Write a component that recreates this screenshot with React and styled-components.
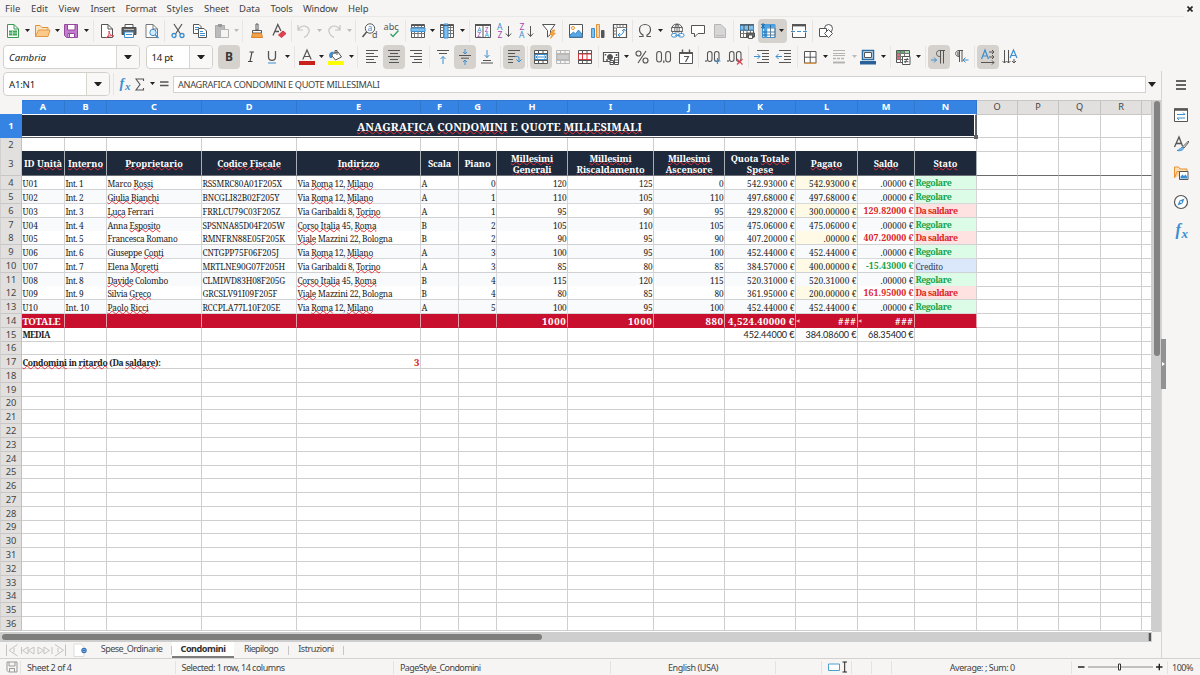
import React, { useLayoutEffect, useRef } from 'react';
import styled, { createGlobalStyle, css } from 'styled-components';

const SANS = '"Noto Sans", "Open Sans", sans-serif';
const SERIF = '"Noto Serif", "Droid Serif", "DejaVu Serif Condensed", "DejaVu Serif", serif';
const INK = '#555';
const BLUE = '#3b8ed0';

const Global = createGlobalStyle`
  * { box-sizing: border-box; }
  body { margin: 0; background: #f6f5f4; overflow: hidden; font-family: ${SANS}; font-size: 9.5px; color: #3c3c3c; }
`;

/* Text whose tracking is adjusted so that it fills a given width. */
const FitSpan = styled.span`
  display: inline-block;
  position: relative;
  z-index: 1;
  white-space: pre;
  flex: none;
`;
function Fit({ w, children, className }) {
  const ref = useRef(null);
  useLayoutEffect(() => {
    const el = ref.current;
    if (!w) return;
    el.style.letterSpacing = '0px';
    const n = el.textContent.length;
    const gap = (w - el.getBoundingClientRect().width) / n;
    el.style.letterSpacing = gap.toFixed(3) + 'px';
  }, [w, children]);
  return <FitSpan ref={ref} className={className}>{children}</FitSpan>;
}

/* ---------- frame ---------- */
const Window = styled.div`
  width: 1200px; height: 675px; display: flex; flex-direction: column; background: #f6f5f4; overflow: hidden;
`;
const MenuBar = styled.div`
  height: 17px; flex: none; display: flex; align-items: center; position: relative;
  &::after { content: ''; position: absolute; left: 0; right: 16px; bottom: 0; height: 1px; background: #eae9e7; }
`;
const MenuItem = styled.div`
  margin-left: ${p => p.$ml}px; height: 17px; display: flex; align-items: center; color: #424242;
`;
const CloseMark = styled.div`
  margin-left: auto; width: 20px; height: 16px; display: flex; align-items: center; justify-content: center; padding-right: 1px;
`;
const Toolbar = styled.div`
  height: ${p => p.$h}px; flex: none; display: flex; align-items: center; padding-bottom: ${p => p.$pb || 0}px;
`;
const Slot = styled.div`
  flex: none; width: ${p => p.$w}px; margin-left: ${p => p.$ml}px; height: 24px;
  display: flex; align-items: center; justify-content: center; gap: 0;
  border-radius: 4px; background: ${p => (p.$on ? '#d5d2ce' : 'transparent')};
  svg { display: block; flex: none; overflow: visible; }
`;
const Sep = styled.div`
  flex: none; width: 1px; height: 22px; margin-left: ${p => p.$ml}px; background: #e6e5e3;
`;
const Combo = styled.div`
  flex: none; width: ${p => p.$w}px; height: 24px; margin-left: ${p => p.$ml}px; display: flex;
  background: #fff; border: 1px solid #d3d0cc; border-radius: 4px; overflow: hidden;
`;
const ComboText = styled.div`
  flex: 1; display: flex; align-items: center; padding-left: ${p => p.$pl || 5}px; color: #222; font-size: 9.6px;
  font-style: ${p => (p.$italic ? 'italic' : 'normal')};
`;
const ComboButton = styled.div`
  width: 23px; border-left: 1px solid #d8d5d1; background: #f9f8f7; display: flex; align-items: center; justify-content: center;
`;

const Tri = ({ w = 6, c = '#222' }) => (
  <svg width={w} height={w * 0.62} viewBox="0 0 10 6"><path d="M0 0H10L5 6Z" fill={c} /></svg>
);
const Svg = ({ children, w = 16, h = 16, vb }) => (
  <svg width={w} height={h} viewBox={vb || `0 0 ${w} ${h}`} fill="none" stroke={INK} strokeWidth="1">{children}</svg>
);
const T = ({ x, y, s = 8, c = INK, children, b, i, f = SANS }) => (
  <text x={x} y={y} fontSize={s} fill={c} stroke="none" fontFamily={f} fontWeight={b ? 700 : 400} fontStyle={i ? 'italic' : 'normal'}>{children}</text>
);

const gridLines = 'M1.5 4.5H14.5M1.5 7.5H14.5M1.5 10.5H14.5M4.5 1.5V14.5M8 1.5V14.5M11.5 1.5V14.5';
const icons = {
  newdoc: <><path d="M2.500 1.500H9L13.500 6V14.500H2.500Z" stroke="#3a9a50" fill="#fff" /><path d="M9 1.500V6H13.500" stroke="#3a9a50" /><path d="M4 7.500H12V12.500H4Z" fill="#43a55a" stroke="none" /><path d="M4 10H12M7.500 8V12.500" stroke="#c9ecd0" strokeWidth=".8" /></>,
  open: <><path d="M1.500 13.500V2.500H6L8 4.500H14V7" stroke="#dd9438" fill="#fbe3c0" /><path d="M1.500 13.500L4.500 7H16L14 13.500Z" fill="#fbc98a" stroke="#e39a45" /></>,
  save: <><path d="M1.500 1.500H14.500V14.500H3.500L1.500 12.500Z" fill="#c27ccb" stroke="#96479f" /><path d="M4.500 1.500H12V7H4.500Z" fill="#fff" stroke="#96479f" /><path d="M5 10.500H11.500V14.500H5Z" fill="#fff" stroke="#96479f" /><path d="M6.500 11V14" stroke="#96479f" /></>,
  pdf: <><path d="M2.500 1.500H9L13.500 6V14.500H2.500Z" fill="#fff" /><path d="M9 1.500V6H13.500" /><path d="M7 15C10 13 10.500 10 10 8C10.500 12 13 13 15 13C12 12 9 13 7 15Z" stroke="#d9414c" fill="#fff" /></>,
  print: <><path d="M4 4V1.500H12V4" fill="#fff" /><path d="M1 4.500H15V11.500H1Z" fill="#5a5f63" stroke="#4d4d4d" /><path d="M3 6.500H13" stroke="#bbb" /><path d="M3.500 9H12.500V14.500H3.500Z" fill="#fff" stroke={BLUE} /><path d="M5 11.500H11" stroke={BLUE} /></>,
  preview: <><path d="M2 1.500H9L13.500 6V14.500H2Z" fill="#fff" stroke="#777" /><path d="M9 1.500V6H13.500" stroke="#777" /><circle cx="9" cy="9.500" r="3.200" stroke={BLUE} fill="#d5eafa" /><path d="M11.300 12L14.500 15" stroke={BLUE} strokeWidth="1.500" /></>,
  cut: <><path d="M4 1L10.500 11M12 1L5.500 11" stroke="#555" strokeWidth="1.200" /><circle cx="4" cy="12.500" r="2" stroke={BLUE} strokeWidth="1.300" /><circle cx="12" cy="12.500" r="2" stroke={BLUE} strokeWidth="1.300" /></>,
  copy: <><path d="M1.500 1.500H7L9 3.500V10.500H1.500Z" fill="#fff" /><path d="M6.500 5.500H12L14.500 8V14.500H6.500Z" fill="#fff" /><path d="M3 4.500H7M3 6.500H6M8 8.500H11M8 10.500H13M8 12.500H13" stroke={BLUE} /></>,
  paste: <><path d="M1.500 2.500H10.500V14.500H1.500Z" fill="#bbb" stroke="#aaa" /><path d="M4 1H8V4H4Z" fill="#999" stroke="none" /><path d="M6.500 6.500H14.500V14.500H6.500Z" fill="#f4f4f4" stroke="#b5b5b5" /></>,
  brush: <><path d="M7 1H9V7H7Z" fill="#fff" stroke="#555" /><path d="M3.500 7.500H12.500V10H3.500Z" fill="#fff" stroke="#555" /><path d="M3.500 10.500H12.500L13.500 14.500H2.500Z" fill="#f3a248" stroke="#d9822b" /></>,
  clear: <><path d="M2 12.500L6.800 1.500L10 8M3.500 8.500H8" strokeWidth="1.300" /><path d="M7.500 12L12 8L15 10.500L10.500 14.500Z" fill="#e0424f" stroke="#d03440" /></>,
  undo: <path d="M2 2V7H7M2 7C4 3 8 2 11 4C15 7 13 12 8 14.500" stroke="#c4c4c4" strokeWidth="1.200" />,
  redo: <path d="M14 2V7H9M14 7C12 3 8 2 5 4C1 7 3 12 8 14.500" stroke="#c4c4c4" strokeWidth="1.200" />,
  find: <><circle cx="8" cy="5.500" r="4.700" fill="#fff" /><path d="M4.800 8.800L.5 14" strokeWidth="1.500" /><T x={5.500} y={8} s={8.500} c={BLUE}>a</T><T x={10} y={15} s={9}>d</T></>,
  abc: <><T x={-.5} y={6.500} s={9.200}>abc</T><path d="M6.500 11L9 13.500L14.500 7.500" stroke="#38a169" strokeWidth="1.400" /></>,
  rows: <><path d="M1.500 1.500H14.500V14.500H1.500Z" fill="#fff" /><path d={gridLines} stroke="#777" /><path d="M1 5H15V8.500H1Z" fill="#7fc0ef" stroke={BLUE} /><path d="M1.500 2.500H14.500" /></>,
  cols: <><path d="M1.500 1.500H14.500V14.500H1.500Z" fill="#fff" /><path d={gridLines} stroke="#777" /><path d="M5 1V15H9V1Z" fill="#7fc0ef" stroke={BLUE} /><path d="M1.500 2.500H14.500" /></>,
  sort: <><path d="M.5 1.500H15.500V14.500H.5ZM8 2V14.500" fill="#fff" /><path d="M0 2H16" strokeWidth="2" /><T x={2.200} y={8.500} s={6.500} c={BLUE}>A</T><T x={2.200} y={14} s={6.500} c="#9b3fb0">Z</T><T x={9.700} y={8.500} s={6.500} c="#9b3fb0">Z</T><T x={9.700} y={14} s={6.500} c={BLUE}>A</T></>,
  az: <><T x={0} y={6.500} s={8.500} c={BLUE}>A</T><T x={0.500} y={15} s={8.500} c="#a545b8">Z</T><path d="M11.500 3V13.500M8.800 10.500L11.500 13.500L14.200 10.500" /></>,
  za: <><T x={0.500} y={6.500} s={8.500} c="#a545b8">Z</T><T x={0} y={15} s={8.500} c={BLUE}>A</T><path d="M11.500 3V13.500M8.800 10.500L11.500 13.500L14.200 10.500" /></>,
  filter: <><path d="M1.500 1.500H14L9.500 7.500V11.500L6.500 14V7.500Z" fill="#fff" /><path d="M11.500 7L8.500 11.500H11L9.500 15.500L14.500 10H12L14 7Z" fill="#f5a442" stroke="#e48b22" strokeWidth=".6" /></>,
  image: <><path d="M1.500 1.500H14.500V14.500H1.500Z" fill="#fff" /><circle cx="5" cy="5" r="1.500" stroke="#e8912d" /><path d="M2 14V12L5.500 9L7.500 11L10.500 7L14 11V14Z" fill="#5aa6e0" stroke={BLUE} /></>,
  chart: <><path d="M1.500 5.500H4.500V14.500H1.500Z" fill="#7fc0ef" stroke={BLUE} /><path d="M6.500 1.500H9.500V14.500H6.500Z" fill="#fbd5a5" stroke="#e8912d" /><path d="M11.500 7.500H14V14.500H11.500Z" fill="#555" /></>,
  pivot: <><path d="M1.500 1.500H14.500V14.500H1.500Z" fill="#fff" strokeWidth="1.200" /><path d="M5 2V4.500H14.500M2 5H4.500V14.500M8 2V4M11 2V4M2 8H4M2 11H4" stroke="#777" /><path d="M6 12C9 13 12 10 12 6.500M10 8L12 6L13.500 8M8 10L6 12L8 13.800" stroke={BLUE} /></>,
  omega: <path d="M2 13.500H6V12C3 10.500 2.500 8 2.500 6.500C2.500 3.500 5 1.500 8 1.500S13.500 3.500 13.500 6.500C13.500 8 13 10.500 10 12V13.500H14" strokeWidth="1.200" />,
  link: <><circle cx="8" cy="6.500" r="5.500" fill="#fff" /><path d="M2.500 4.500H13.500M2.500 8.500H13.500M8 1V12M8 1C5 3 5 10 8 12M8 1C11 3 11 10 8 12" strokeWidth=".9" /><path d="M2 12.200H15" stroke="#f6f5f4" strokeWidth="5" /><rect x="2.500" y="10.500" width="5.500" height="3.500" rx="1.700" stroke={BLUE} fill="#fff" /><rect x="9.500" y="10.500" width="5.500" height="3.500" rx="1.700" stroke={BLUE} fill="#fff" /><path d="M6 12.300H11.500" stroke={BLUE} /></>,
  comment: <path d="M1.500 2.500H14.500V10.500H8L4.500 14V10.500H1.500Z" fill="#fff" />,
  header: <><path d="M2.500 1.500H9L13.500 6V14.500H2.500Z" fill="#d6d6d6" stroke="#b5b5b5" /><path d="M4 12.500H12" stroke="#bbb" /></>,
  printarea: <><path d="M1.500 1.500H14.500V14.500H1.500Z" fill="#fff" /><path d={gridLines} stroke="#777" /><path d="M1.500 2H14.500V7H1.500Z" fill="#7fc0ef" stroke={BLUE} /><path d="M1 2H15M5 2V7M9.500 2V7" strokeWidth="1" /><path d="M7.500 10H15.500V14H7.500Z" fill="#666" /><path d="M9.500 12H13.500V15.500H9.500Z" fill="#fff" /></>,
  freeze: <><path d="M2.500 1.500H15V14.500H2.500Z" fill="#fff" stroke={BLUE} /><path d="M3 5H15V14.500M3 9H15M3 12H15M10.500 4V14.500" stroke="#5b7f9c" /><path d="M2.500 3H15M5.500 1.500V14.500" stroke="#51a3df" strokeWidth="3.500" /><path d="M3 9H7M3 12H7M10.500 2V5" stroke="#246a9f" /><path d="M1 1L5 5M5 1L1 5M3 0V6" stroke="#1d6aa5" strokeWidth=".9" /></>,
  split: <><path d="M1.500 1.500H14.500V14.500H1.500Z" fill="#fff" /><path d="M1 2.200H15" strokeWidth="2.400" /><path d="M0 8.500H16" stroke="#fff" strokeWidth="2" /><path d="M0 8.500H16" stroke={BLUE} strokeDasharray="4 2" /></>,
  shapes: <><circle cx="10.500" cy="5.500" r="4" fill="#fff" /><path d="M1.500 5.500H8.500V13.500H1.500Z" fill="#fff" /><path d="M10.500 6.500L14.500 10.500L10.500 14.500L6.500 10.500Z" fill="#fff" /></>,
  bold: <T x={3.900} y={12.300} s={12} b c="#383838">B</T>,
  italic: <path d="M6.500 3H11M5 12.500H9.500M9 3L7 12.500" strokeWidth="1.200" stroke="#444" />,
  under: <><path d="M4.500 2V8C4.500 12.500 11.500 12.500 11.500 8V2" strokeWidth="1.300" /><path d="M4 14H12" stroke={BLUE} /></>,
  fcolor: <><path d="M3.800 10.500L8 1L12.200 10.500M5.200 7.500H10.800" strokeWidth="1.200" /><path d="M0 12H16V16H0Z" fill="#c9211e" stroke="none" /></>,
  fill: <><path d="M4.500 4.500L10 3L13.500 8L7.500 11L4 7Z" fill="#fff" /><path d="M7 5V1.500H9V6" /><path d="M1 7C1 3 4 2 6 3L4 6V9H2Z" fill={BLUE} stroke="none" /><path d="M0 12H16V16H0Z" fill="#ff0" stroke="none" /></>,
  left: <path d="M2 1.500H14M2 4.500H10M2 7.500H14M2 10.500H10M2 13.500H12" />,
  center: <path d="M2 1.500H14M4 4.500H12M2 7.500H14M4 10.500H12M3 13.500H13" />,
  right: <path d="M2 1.500H14M6 4.500H14M2 7.500H14M6 10.500H14M4 13.500H14" />,
  top: <><path d="M2 1.500H14M4 4.500H12" /><path d="M8 15V7.500M5.500 10L8 7.500L10.500 10" stroke={BLUE} /></>,
  middle: <><path d="M2 6.500H14M4 9.200H12" /><path d="M8 0V4.500M6 3L8 5L10 3M8 16V11.500M6 13L8 11L10 13" stroke={BLUE} /></>,
  bottom: <><path d="M4 11.500H12M2 14H14" /><path d="M8 1V8.500M5.500 6L8 8.500L10.500 6" stroke={BLUE} /></>,
  wrap: <><path d="M2 1.500H14M2 4.500H9M2 7.500H9M2 10.500H7M2 13.500H7" /><path d="M9 7.500H11.500Q13 7.500 13 9V12.500M10.500 10.500L13 13L15.500 10.500" stroke={BLUE} /></>,
  merge: <><path d="M1.500 1.500H14.500V14.500H1.500ZM5.500 2V14M10 2V14M2 4.500H14M2 11.500H14" fill="#fff" /><path d="M2 5.500H14V10.500H2Z" fill="#fff" stroke={BLUE} /><path d="M3 8H13M4.500 6.500L3 8L4.500 9.500M11.500 6.500L13 8L11.500 9.500" stroke={BLUE} /></>,
  merge2: <><path d="M1.500 1.500H14.500V14.500H1.500ZM5.500 2V14M10 2V14M2 4.500H14M2 11.500H14" stroke="#b8b8b8" /><path d="M2 5.500H14V10.500H2Z" fill="#ccc" stroke="#b8b8b8" /></>,
  unmerge: <><path d="M1.500 1.500H14.500V14.500H1.500ZM5.500 2V14M10 2V14M2 4.500H14M2 11.500H14" fill="#fff" /><path d="M1.500 5H14.500V10.500H1.500ZM5.500 5V10.500M10 5V10.500" fill="#fff" stroke="#d9363e" /></>,
  money: <><path d="M.5 3.500H15.500V12.500H.5Z" fill="#fff" strokeWidth="1.200" /><circle cx="7" cy="8" r="2.500" fill="#555" /><path d="M2.500 5V6.500M13.500 5V7M3 11H5" strokeWidth="1.500" /><path d="M7 11.500H10.500V15.500H7ZM11.500 8.500H15.500V15.500H11.500Z" fill="#fff" /><path d="M7 13.500H10.500M11.500 11H15.500M11.500 13.500H15.500" /></>,
  percent: <><circle cx="4.500" cy="4.500" r="2.500" strokeWidth="1.200" /><circle cx="11.500" cy="11.500" r="2.500" strokeWidth="1.200" /><path d="M12 2L4 14" strokeWidth="1.200" /></>,
  number: <><rect x=".7" y="2.500" width="4.800" height="10.500" rx="2.400" strokeWidth="1.100" /><rect x="9.700" y="2.500" width="4.800" height="10.500" rx="2.400" strokeWidth="1.100" /><path d="M7.800 11.500V14" strokeWidth="1.200" /></>,
  date: <><path d="M1.500 3.500H14.500V14.500H1.500Z" fill="#fff" /><path d="M1.500 4H14.500" strokeWidth="2" /><path d="M4.500 .5V4M11.500 .5V4" strokeWidth="1.400" /><path d="M6 7.500H10.500L7.500 13" strokeWidth="1.200" /></>,
  adddec: <><path d="M1 11V13" strokeWidth="1.200" /><rect x="2.500" y="2.500" width="4.500" height="10" rx="2.200" strokeWidth="1.100" /><rect x="9.500" y="2.500" width="4.500" height="10" rx="2.200" strokeWidth="1.100" /><path d="M12.500 9V15M9.500 12H15.500" stroke={BLUE} strokeWidth="1.200" /></>,
  deldec: <><path d="M1 11V13" strokeWidth="1.200" /><rect x="2.500" y="2.500" width="4.500" height="10" rx="2.200" strokeWidth="1.100" /><rect x="9.500" y="2.500" width="4.500" height="10" rx="2.200" strokeWidth="1.100" /><path d="M10 10L15.500 15.500M15.500 10L10 15.500" stroke="#e0424f" strokeWidth="1.200" /></>,
  indent: <><path d="M3 1.500H15M8 4.500H15M8 7.500H15M8 10.500H15M3 13.500H15" /><path d="M0 7.500H6M3.500 5L6 7.500L3.500 10" stroke={BLUE} /></>,
  outdent: <><path d="M3 1.500H15M8 4.500H15M8 7.500H15M8 10.500H15M3 13.500H15" /><path d="M0 7.500H6M2.500 5L0 7.500L2.500 10" stroke={BLUE} /></>,
  border: <><path d="M2.500 2.500H14V14H2.500ZM8.200 2.500V14M2.500 8.200H14" fill="#fff" /><path d="M2 14.200H14.500" stroke="#e8912d" /></>,
  lines: <><path d="M2 1.500H14M2 4.500H14M2 6.500H14" stroke="#b4b4b4" /><path d="M2 9.500H14" stroke="#b4b4b4" strokeDasharray="3 1" strokeWidth="1.500" /><path d="M2 13.500H14" stroke="#b4b4b4" strokeWidth="2" /></>,
  linecolor: <><path d="M2.500 1.500H13.500V10.500H2.500Z" fill="#d8e9f7" stroke="#2b6ca3" strokeWidth="1.500" /><path d="M4.500 3.500H11.500V8.500H4.500Z" fill="#fff" /><path d="M0 12H16V15.500H0Z" fill="#2a6099" stroke="none" /></>,
  cond: <><path d="M1.500 1.500H14.500V13.500H1.500Z" fill="#fff" /><path d="M2 2H9V4H2Z" fill="#59b36c" stroke="none" /><path d="M2 5H6V10H2Z" fill="#e46a70" stroke="none" /><path d="M9 2H14V4H9Z" fill="#a9dcb3" stroke="none" /><path d="M1.500 4.500H14.500M1.500 7.500H14.500M1.500 10.500H14.500M5.500 2V13.500M9.500 2V13.500" stroke="#777" /><path d="M7.500 7.500H15V15.500H7.500Z" fill="#fff" /><path d="M9 10.500H13.500M9 12.700H13.500M12.500 9L10 14" /></>,
  ltr: <><path d="M14 1.500H8.500C4.500 1.500 4.500 7.500 8.500 7.500H9.500M9.500 1.500V14.500M12.500 1.500V14.500" /><path d="M0 11H5.500M3 8.500L5.500 11L3 13.500" stroke={BLUE} /></>,
  rtl: <><path d="M10 1.500H6C1.500 1.500 1.500 7.500 6 7.500H6.500M6.500 1.500V13M9 1.500V13" /><path d="M4 2.500H6V7H4Z" fill="#999" stroke="none" /><path d="M10 11H15.500M12.500 8.500L10 11L12.500 13.500" stroke={BLUE} /></>,
  dirh: <><path d="M1.500 10L5 1L8.500 10M2.800 7H7.200" stroke={BLUE} strokeWidth="1.200" /><path d="M9 3H14M12 1L14 3L12 5M9 8H14M12 6L14 8L12 10M1 13.500H14M12 11.500L14 13.500L12 15.500" /></>,
  dirv: <><path d="M8 9L11.500 1L15 9M9.300 6.500H13.700" stroke={BLUE} strokeWidth="1.200" /><path d="M2.500 1V14M.5 12L2.500 14L4.500 12M6.500 1V14M4.500 12L6.500 14L8.500 12M12 10V14M10 12L12 14L14 12" /></>,
};

const ICON = name => <Svg>{icons[name]}</Svg>;

const row1 = [
  ['i', 'newdoc', 13], ['a', 27.5], ['i', 'open', 42], ['a', 57], ['i', 'save', 71], ['a', 86], ['s', 93],
  ['i', 'pdf', 107], ['i', 'print', 129], ['i', 'preview', 151.5], ['s', 164],
  ['i', 'cut', 178], ['i', 'copy', 200], ['i', 'paste', 221.5], ['a', 236, 'dim'], ['s', 242],
  ['i', 'brush', 256.5], ['i', 'clear', 278.5], ['s', 291], ['i', 'undo', 304], ['a', 319.5, 'dim'],
  ['i', 'redo', 334], ['a', 349, 'dim'], ['s', 355], ['i', 'find', 370], ['i', 'abc', 391.5], ['s', 405],
  ['i', 'rows', 418], ['a', 432.5], ['i', 'cols', 447], ['a', 462], ['s', 469],
  ['i', 'sort', 482.5], ['i', 'az', 505], ['i', 'za', 527], ['i', 'filter', 549], ['s', 562],
  ['i', 'image', 575.5], ['i', 'chart', 597.5], ['i', 'pivot', 620], ['s', 632],
  ['i', 'omega', 645], ['a', 660.5], ['i', 'link', 676.5], ['i', 'comment', 698], ['i', 'header', 720], ['s', 733],
  ['i', 'printarea', 747], ['g', 'freeze', 772.5], ['i', 'split', 798.5], ['s', 812], ['i', 'shapes', 826],
];
const row2 = [
  ['o', 'bold', 229], ['i', 'italic', 251], ['i', 'under', 271.5], ['a', 287], ['s', 294],
  ['i', 'fcolor', 306.5], ['a', 321.5], ['i', 'fill', 335.5], ['a', 351], ['s', 357],
  ['i', 'left', 371.5], ['o', 'center', 393.5], ['i', 'right', 415.5], ['s', 429],
  ['i', 'top', 442.5], ['o', 'middle', 464.5], ['i', 'bottom', 486.5], ['s', 500],
  ['o', 'wrap', 513.5], ['s', 527], ['o', 'merge', 541], ['i', 'merge2', 563], ['i', 'unmerge', 585], ['s', 598],
  ['i', 'money', 611], ['a', 626], ['i', 'percent', 641.5], ['i', 'number', 663.5], ['i', 'date', 685.5], ['s', 698],
  ['i', 'adddec', 712.5], ['i', 'deldec', 734.5], ['s', 748], ['i', 'indent', 762], ['i', 'outdent', 784], ['s', 797],
  ['i', 'border', 809.5], ['a', 825], ['i', 'lines', 839], ['a', 854, 'dim'], ['i', 'linecolor', 868], ['a', 883], ['s', 890],
  ['i', 'cond', 903], ['a', 918], ['s', 925], ['o', 'ltr', 938.5], ['i', 'rtl', 961], ['s', 974], ['o', 'dirh', 988], ['i', 'dirv', 1010],
];
const WIDTH = { i: 16, o: 22, g: 29, a: 6, s: 1 };
function Tools({ items, start }) {
  let x = start;
  return items.map((it, k) => {
    const [kind] = it;
    const c = kind === 'a' || kind === 's' ? it[1] : it[2];
    const w = WIDTH[kind];
    const ml = c - w / 2 - x;
    x = c + w / 2;
    if (kind === 's') return <Sep key={k} $ml={ml} />;
    if (kind === 'a') return <Slot key={k} $w={w} $ml={ml}><Tri w={5} c={it[2] ? '#bbb' : '#222'} /></Slot>;
    return (
      <Slot key={k} $w={w} $ml={ml} $on={kind !== 'i'}>
        {ICON(it[1])}
        {kind === 'g' && <Slot $w={7} $ml={2}><Tri w={5} /></Slot>}
      </Slot>
    );
  });
}

/* ---------- body ---------- */
const Body = styled.div`flex: 1; display: flex; min-height: 0;`;
const Main = styled.div`width: 1161px; flex: none; display: flex; flex-direction: column;`;
const FormulaBar = styled.div`height: 29px; flex: none; display: flex; align-items: center; padding-bottom: 3px;`;
const FormulaInput = styled.div`
  width: 973px; height: 17px; margin-left: 4px; background: #fff; border: 1px solid #d4d2cf;
  display: flex; align-items: center; padding-left: 4px; font-size: 9.2px; color: #444;
`;
const Mini = styled.div`
  flex: none; width: ${p => p.$w}px; margin-left: ${p => p.$ml || 0}px; display: flex; justify-content: center; align-items: center;
  svg { overflow: visible; }
`;
const SheetArea = styled.div`display: flex; height: 532px; flex: none;`;
const Sheet = styled.div`width: 1152px; overflow: hidden; background: #fff;`;
const COLS = [43, 42, 95, 95, 124, 38, 38, 71, 86, 71, 71, 62, 57, 62, 41, 41, 42, 41, 10];
const LETTERS = 'ABCDEFGHIJKLMNOPQR'.split('').concat('');
const Row = styled.div`
  display: grid; grid-template-columns: 22px ${COLS.map(c => c + 'px').join(' ')}; height: ${p => p.$h}px; position: relative;
`;
const Corner = styled.div`background: #f6f5f4; border-right: 1px solid #f6f5f4;`;
const ColHead = styled.div`
  display: flex; align-items: center; justify-content: center; font-size: 9.2px; line-height: 12px; padding-bottom: 1px;
  background: ${p => (p.$on ? '#3584e4' : '#e1e0df')}; color: ${p => (p.$on ? '#fff' : '#444')};
  font-weight: ${p => (p.$on ? 700 : 400)};
  border-right: 1px solid ${p => (p.$on ? '#2f76cd' : '#c4c3c2')};
  border-top: 1px solid ${p => (p.$on ? '#3079d6' : '#c8c7c6')};
  border-bottom: 1px solid ${p => (p.$on ? '#3584e4' : '#c8c7c6')};
`;
const RowHead = styled.div`
  display: flex; align-items: center; justify-content: center; font-size: 9.3px; line-height: 12px; padding-top: ${p => p.$pt ?? 0}px;
  background: ${p => (p.$on ? '#3584e4' : '#e1e0df')}; color: ${p => (p.$on ? '#fff' : '#444')};
  font-weight: ${p => (p.$on ? 700 : 400)};
  border-right: 1px solid ${p => (p.$on ? '#3584e4' : '#c2c1c0')};
  border-left: 1px solid ${p => (p.$on ? '#3584e4' : '#d2d1d0')};
  border-bottom: 1px solid ${p => (p.$on ? '#3584e4' : '#c8c7c6')};
`;
const Cell = styled.div`
  min-width: 0; display: flex; align-items: center; white-space: nowrap;
  justify-content: ${p => ({ r: 'flex-end', c: 'center' }[p.$a] || 'flex-start')};
  padding: ${p => p.$pt ?? 2.4}px 0 0 ${p => (p.$a ? 0 : 0.4)}px;
  padding-right: ${p => (p.$a === 'r' ? 0.5 : 0)}px;
  background: ${p => p.$bg || 'transparent'}; color: ${p => p.$c || '#1c1c1c'};
  font-family: ${p => p.$f || SERIF}; font-size: ${p => p.$s || 8.3}px; font-weight: ${p => (p.$b ? 700 : 400)};
  font-stretch: condensed; line-height: 11px;
  border-right: 1px solid ${p => p.$line || '#cfcfcf'}; border-bottom: 1px solid ${p => p.$hline || p.$line || '#cfcfcf'};
`;
const HeadCell = styled(Cell)`
  background: #1e293b; color: #fff; font-weight: 700; font-size: 9.2px; flex-direction: column; justify-content: center;
  padding: 2px 0 0; line-height: 11.5px; border-right-color: #a9adb4; border-bottom-color: #6b6f76; overflow: hidden;
  ${p => p.$two && css`justify-content: flex-start; padding-top: 1.5px;`}
`;
const TitleCell = styled.div`
  grid-column: 2 / span 14; background: #1e293b; color: #fff; font-family: ${SERIF}; font-size: 11px; font-weight: 700;
  font-stretch: condensed; display: flex; align-items: center; justify-content: center; position: relative; padding: 1px 0 0 2px;
  border-top: 1px solid #fff; border-bottom: 1px solid #5c5f63; border-right: 2px solid #5f636b;
  box-shadow: inset 0 -1px 0 #fff, inset -1px 0 0 #fff;
`;
const Handle = styled.div`position: absolute; right: -3px; bottom: -2px; width: 4px; height: 4px; background: #5f636b; z-index: 2;`;
const Overflow = styled.div`
  margin-right: auto; width: 4px; svg { display: block; }
`;
const Bad = styled.span`
  text-decoration: underline wavy #e8303a; text-decoration-thickness: 0.8px; text-underline-offset: -0.8px; text-decoration-skip-ink: none;
`;
const rich = s => s.split(/(~[^~]+~)/).map((t, i) => (t[0] === '~' ? <Bad key={i}>{t.slice(1, -1)}</Bad> : t));

const HEADS = [
  [['ID ~Unità~', 38]], [['~Interno~', 35]], [['~Proprietario~', 57.5]], [['~Codice Fiscale~', 63.5]], [['~Indirizzo~', 41.5]],
  [['Scala', 23]], [['Piano', 26]], [['~Millesimi~', 42], ['~Generali~', 38.5]], [['~Millesimi~', 42], ['~Riscaldamento~', 68]],
  [['~Millesimi~', 42], ['~Ascensore~', 47]], [['Quota ~Totale~', 58.5], ['~Spese~', 26.5]], [['~Pagato~', 31.5]], [['~Saldo~', 24.5]], [['~Stato~', 24]],
];
const DATA = [
  ['U01', 'Int. 1', ['Marco ~Rossi~', 45.5], ['RSSMRC80A01F205X', 79.5], 0, 'A', '0', '120', '125', '0', '542.93000 €', '542.93000 €', '.00000 €', 'R'],
  ['U02', 'Int. 2', ['~Giulia Bianchi~', 51.5], ['BNCGLI82B02F205Y', 77], 0, 'A', '1', '110', '105', '110', '497.68000 €', '497.68000 €', '.00000 €', 'R'],
  ['U03', 'Int. 3', ['~Luca~ Ferrari', 46], ['FRRLCU79C03F205Z', 78], 1, 'A', '1', '95', '90', '95', '429.82000 €', '300.00000 €', '129.82000 €', 'D'],
  ['U04', 'Int. 4', ['Anna ~Esposito~', 53], ['SPSNNA85D04F205W', 82.5], 2, 'B', '2', '105', '110', '105', '475.06000 €', '475.06000 €', '.00000 €', 'R'],
  ['U05', 'Int. 5', ['Francesca Romano', 70], ['RMNFRN88E05F205K', 82.5], 3, 'B', '2', '90', '95', '90', '407.20000 €', '.00000 €', '407.20000 €', 'D'],
  ['U06', 'Int. 6', ['Giuseppe ~Conti~', 56], ['CNTGPP75F06F205J', 76.5], 0, 'A', '3', '100', '95', '100', '452.44000 €', '452.44000 €', '.00000 €', 'R'],
  ['U07', 'Int. 7', ['Elena ~Moretti~', 51], ['MRTLNE90G07F205H', 82.5], 1, 'A', '3', '85', '80', '85', '384.57000 €', '400.00000 €', '-15.43000 €', 'C'],
  ['U08', 'Int. 8', ['~Davide~ Colombo', 60.5], ['CLMDVD83H08F205G', 82.5], 2, 'B', '4', '115', '120', '115', '520.31000 €', '520.31000 €', '.00000 €', 'R'],
  ['U09', 'Int. 9', ['Silvia ~Greco~', 43.5], ['GRCSLV91I09F205F', 75], 3, 'B', '4', '80', '85', '80', '361.95000 €', '200.00000 €', '161.95000 €', 'D'],
  ['U10', 'Int. 10', ['~Paolo Ricci~', 41], ['RCCPLA77L10F205E', 78], 0, 'A', '5', '100', '95', '100', '452.44000 €', '452.44000 €', '.00000 €', 'R'],
];
const ADDR = [['Via ~Roma~ 12, ~Milano~', 75.5], ['Via Garibaldi 8, ~Torino~', 83], ['~Corso Italia~ 45, ~Roma~', 79], ['~Viale~ Mazzini 22, Bologna', 95]];
const STATE = {
  R: { t: 'Regolare', w: 36, bg: '#dcfce7', c: '#16a34a', b: true },
  D: { t: 'Da saldare', w: 42, bg: '#fee2e2', c: '#dc2626', b: true },
  C: { t: 'Credito', w: 27.5, bg: '#dbe8fb', c: '#333f55', b: false },
};
const moneyW = s => (s.length > 8 ? 47.5 : 33);

function DataRow({ d, n, h }) {
  const band = n % 2 ? '#f8fafc' : '#fff';
  const st = STATE[d[13]];
  const line = n % 2 ? '#d6d8da' : '#d0d1d2';
  const cell = { $bg: band, $line: line };
  return (
    <Row $h={h}>
      <RowHead>{n}</RowHead>
      <Cell {...cell}><Fit w={15.5}>{d[0]}</Fit></Cell>
      <Cell {...cell}><Fit w={d[1].length > 6 ? 23.5 : 18}>{d[1]}</Fit></Cell>
      <Cell {...cell}><Fit w={d[2][1]}>{rich(d[2][0])}</Fit></Cell>
      <Cell {...cell}><Fit w={d[3][1]}>{d[3][0]}</Fit></Cell>
      <Cell {...cell}><Fit w={ADDR[d[4]][1]}>{rich(ADDR[d[4]][0])}</Fit></Cell>
      <Cell {...cell}>{d[5]}</Cell>
      {[6, 7, 8, 9].map(k => <Cell key={k} {...cell} $a="r"><Fit w={d[k].length * 4.5}>{d[k]}</Fit></Cell>)}
      <Cell {...cell} $a="r"><Fit w={47.5}>{d[10]}</Fit></Cell>
      <Cell {...cell} $bg={n % 2 ? band : '#fefae6'} $a="r"><Fit w={moneyW(d[11])}>{d[11]}</Fit></Cell>
      {st.t === 'Regolare'
        ? <Cell {...cell} $a="r"><Fit w={33}>{d[12]}</Fit></Cell>
        : <Cell {...cell} $a="r" $b $pt={2} $s={8.8} $c={st.t === 'Credito' ? '#16a34a' : '#dc2626'}><Fit w={st.t === 'Credito' ? 47.5 : 50}>{d[12]}</Fit></Cell>}
      <Cell {...cell} $bg={st.bg} $c={st.c} $b={st.b} $pt={st.b ? 2.4 : 2.4} $s={st.b ? 8.8 : 8.3}><Fit w={st.w}>{st.t}</Fit></Cell>
      {[0, 1, 2, 3, 4].map(k => <Cell key={k} />)}
    </Row>
  );
}
const bottomOf = k => Math.round(176.2 + 13.78 * k);
const heightOf = n => (n === 4 ? 14 : bottomOf(n - 3) - bottomOf(n - 4));
const blanks = k => Array.from({ length: k }, (_, i) => <Cell key={'b' + i} />);

const VTrack = styled.div`width: 9px; background: #cecece; padding: 1px 1px 0 2px;`;
const VThumb = styled.div`height: 255px; width: 6px; border-radius: 3px; background: #828282;`;
const HTrack = styled.div`height: 10px; width: 1152px; flex: none; background: #cecece; display: flex; align-items: center; padding-left: 2px;`;
const HThumb = styled.div`width: 540px; height: 6px; border-radius: 3px; background: #7e7f7d;`;
const HGrip = styled.div`margin-left: auto; margin-right: 1px; width: 3px; height: 8px; background: #555; border-left: 1px solid #aaa;`;
const TabBar = styled.div`height: 16px; flex: none; display: flex; align-items: stretch; padding-left: 6px;`;
const NavIcons = styled.div`width: 62px; display: flex; align-items: center;`;
const AddSheet = styled.div`width: 21px; margin-left: 5px; display: flex; align-items: center;`;
const Tab = styled.div`
  width: ${p => p.$w}px; display: flex; align-items: center; justify-content: center; font-size: 9.1px; line-height: 12px; padding-bottom: 1px;
  padding-right: ${p => p.$pr || 0}px;
  background: ${p => (p.$on ? '#fff' : 'transparent')}; font-weight: ${p => (p.$on ? 700 : 400)};
  border-bottom: 2px solid ${p => (p.$on ? '#7d7d7d' : 'transparent')};
  color: ${p => (p.$on ? '#2e2e2e' : '#4a4a4a')};
`;
const TabSep = styled.div`width: 1px; height: 9px; align-self: center; background: #c8c7c6;`;
const StatusBar = styled.div`
  height: 17px; flex: none; border-top: 1px solid #d2d1cf; display: flex; align-items: center; font-size: 9px; color: #444;
`;
const StatusPart = styled.div`
  width: ${p => p.$w}px; height: 13px; display: flex; align-items: center; padding-left: ${p => p.$pl || 0}px;
  justify-content: ${p => (p.$c ? 'center' : 'flex-start')}; border-right: 1px solid ${p => (p.$last ? 'transparent' : '#e4e3e1')}; flex: none;
`;
const Side = styled.div`
  width: 39px; border-left: 1px solid #d6d5d3; display: flex; flex-direction: column; align-items: center; padding-top: 6px; position: relative;
`;
const SideItem = styled.div`height: ${p => p.$h || 29}px; width: 39px; display: flex; align-items: flex-start; justify-content: center; svg { display: block; overflow: visible; }`;
const SideGrip = styled.div`
  position: absolute; left: -1px; top: 268px; width: 5px; height: 50px; background: #919392; display: flex; align-items: center;
`;

const MENU = [['File', 5, 15.5], ['Edit', 31, 17], ['View', 58.5, 21], ['Insert', 90.5, 24.5], ['Format', 125.5, 31], ['Styles', 166.5, 27], ['Sheet', 204, 25], ['Data', 239, 21], ['Tools', 270.5, 22], ['Window', 303, 34.5], ['Help', 348, 20.5]];

export default function App() {
  let mx = 0;
  return (
    <Window>
      <Global />
      <MenuBar>
        {MENU.map(([t, x, w]) => {
          const ml = x - mx;
          mx = x + w;
          return <MenuItem key={t} $ml={ml}><Fit w={w}>{t}</Fit></MenuItem>;
        })}
        <CloseMark><Svg w={6} h={6}><path d="M.5.5L5.500 5.500M5.500.5L.5 5.500" stroke="#222" strokeWidth="1.600" /></Svg></CloseMark>
      </MenuBar>
      <Toolbar $h={27}><Tools items={row1} start={0} /></Toolbar>
      <Toolbar $h={27} $pb={1}>
        <Combo $w={137} $ml={3}><ComboText $italic><Fit w={37}>Cambria</Fit></ComboText><ComboButton><Tri w={8} /></ComboButton></Combo>
        <Combo $w={67} $ml={5.5}><ComboText><Fit w={21.5}>14 pt</Fit></ComboText><ComboButton><Tri w={8} /></ComboButton></Combo>
        <Tools items={row2} start={212.5} />
      </Toolbar>
      <Body>
        <Main>
          <FormulaBar>
            <Combo $w={107} $ml={3}><ComboText><Fit w={26}>A1:N1</Fit></ComboText><ComboButton><Tri w={8} /></ComboButton></Combo>
            <Sep $ml={3} />
            <Mini $w={12} $ml={5}><Svg w={12} h={14}><T x={0.500} y={11} s={14} i b c={BLUE} f='"Liberation Serif", serif'>f</T><T x={6} y={13} s={11} i b c={BLUE} f='"Liberation Serif", serif'>x</T></Svg></Mini>
            <Mini $w={10} $ml={4}><Svg w={10} h={13}><path d="M8.500 3V1H1L5 6.500L1 12H8.500V10" strokeWidth="1.100" /></Svg></Mini>
            <Mini $w={8} $ml={3}><Tri w={5} /></Mini>
            <Mini $w={9} $ml={4}><Svg w={9} h={6}><path d="M0 1H8.500M0 4.500H8.500" strokeWidth="1.300" /></Svg></Mini>
            <FormulaInput><Fit w={201.5}>ANAGRAFICA CONDOMINI E QUOTE MILLESIMALI</Fit></FormulaInput>
            <Mini $w={12}><Tri w={8} /></Mini>
          </FormulaBar>
          <SheetArea>
            <Sheet>
              <Row $h={14}>
                <Corner />
                {LETTERS.map((l, i) => <ColHead key={i} $on={i < 14}>{l}</ColHead>)}
              </Row>
              <Row $h={24}>
                <RowHead $on>1</RowHead>
                <TitleCell>
                  <Fit w={285}>{rich('~ANAGRAFICA~ ~CONDOMINI~ E QUOTE ~MILLESIMALI~')}</Fit>
                  <Handle />
                </TitleCell>
                {blanks(5)}
              </Row>
              <Row $h={13}><RowHead $pt={1}>2</RowHead>{blanks(19)}</Row>
              <Row $h={25}>
                <RowHead $pt={1}>3</RowHead>
                {HEADS.map((ls, i) => (
                  <HeadCell key={i} $two={ls.length > 1}>{ls.map(([t, w]) => <Fit key={t} w={w}>{rich(t)}</Fit>)}</HeadCell>
                ))}
                {[0, 1, 2, 3, 4].map(k => <Cell key={k} $hline="#6b6b6b" />)}
              </Row>
              {DATA.map((d, i) => <DataRow key={i} d={d} n={i + 4} h={heightOf(i + 4)} />)}
              <Row $h={heightOf(14)}>
                <RowHead>14</RowHead>
                {[['TOTALE', 38], null, null, null, null, null, null, ['1000', 24.5], ['1000', 24.5], ['880', 18], ['4,524.40000 €', 66.5], ['###', 18.5], ['###', 18.5], null].map((v, i) => (
                  <Cell key={i} $bg="#c8102e" $c="#fff" $b $s={9.7} $pt={1} $a={i ? 'r' : undefined} $line="#dfa0aa" $hline="#c8102e">
                    {v && v[0] === '###' && <Overflow><svg width="4" height="4" viewBox="0 0 4 4"><path d="M0 2L3.500 .3V3.700Z" fill="#f3b6bf" /></svg></Overflow>}
                    {v && <Fit w={v[1]}>{v[0]}</Fit>}
                  </Cell>
                ))}
                {blanks(5)}
              </Row>
              <Row $h={heightOf(15)}>
                <RowHead>15</RowHead>
                <Cell $b $s={8.6}><Fit w={27.5}>MEDIA</Fit></Cell>
                {blanks(9)}
                {[['452.44000 €', 51], ['384.08600 €', 51], ['68.35400 €', 45.5]].map(([t, w]) => (
                  <Cell key={t} $a="r" $f='Lato, "Open Sans", sans-serif' $s={9.1} $pt={0}><Fit w={w}>{t}</Fit></Cell>
                ))}
                {blanks(6)}
              </Row>
              <Row $h={heightOf(16)}><RowHead>16</RowHead>{blanks(19)}</Row>
              <Row $h={heightOf(17)}>
                <RowHead>17</RowHead>
                <Cell $b $s={8.5}><Fit w={138}>{rich('~Condomini~ in ~ritardo~ (Da ~saldare~):')}</Fit></Cell>
                {blanks(3)}
                <Cell $b $s={9.6} $c="#dc2626" $a="r" $pt={1}>3</Cell>
                {blanks(14)}
              </Row>
              {Array.from({ length: 19 }, (_, i) => (
                <Row key={i} $h={heightOf(i + 18)}><RowHead>{i + 18}</RowHead>{blanks(19)}</Row>
              ))}
            </Sheet>
            <VTrack><VThumb /></VTrack>
          </SheetArea>
          <HTrack><HThumb /><HGrip /></HTrack>
          <TabBar>
            <NavIcons>
              <Svg w={62} h={14}><path d="M.5 1.500V13M11.500 1.500L3 7.300L11.500 13M8 5V9.500M15.500 4V11M22 4L16.500 7.500L22 11ZM28 4L22.500 7.500L28 11ZM32 4L37.500 7.500L32 11ZM38 4L43.500 7.500L38 11ZM46 4V11M49 1.500L57.500 7.300L49 13M52 5V9.500M59.500 1.500V13" stroke="#c4c3c1" /></Svg>
            </NavIcons>
            <AddSheet><Svg w={16} h={14}><path d="M1 1H8L11 4V13.500H1Z" fill="#fff" stroke="#ddd" /><circle cx="11" cy="7.500" r="2.100" fill="#fff" stroke="#2f6fb5" strokeWidth="1.200" /><path d="M11 6V9M9.500 7.500H12.500" stroke="#2f6fb5" /></Svg></AddSheet>
            <Tab $w={77} $pr={2}><Fit w={61.5}>Spese_Ordinarie</Fit></Tab>
            <TabSep />
            <Tab $w={62} $on><Fit w={45}>Condomini</Fit></Tab>
            <Tab $w={54}><Fit w={34}>Riepilogo</Fit></Tab>
            <TabSep />
            <Tab $w={54}><Fit w={35.500}>Istruzioni</Fit></Tab>
            <TabSep />
          </TabBar>
        </Main>
        <Side>
          <SideItem $h={29.500}><Svg><path d="M3 4H13M3 8H13M3 12H13" stroke="#333" strokeWidth="1.500" /></Svg></SideItem>
          <SideItem><Svg><path d="M1.500 2H14.500V14.500H1.500Z" fill="#fff" /><path d="M1 2.500H15" strokeWidth="2.500" /><path d="M4 7.500H12M10 5.500L12 7.500M4 11H12M6 13L4 11" stroke={BLUE} /></Svg></SideItem>
          <SideItem><Svg><path d="M1.500 11L6 1L9.500 10M3 7.500H8.500" strokeWidth="1.300" /><path d="M15.500 5L9.500 11L11 12L15.500 6.500Z" fill="#fff" /><path d="M4 14.500C7 14.500 7 11 9.500 11.500C12 12.500 9 15.500 4 14.500Z" fill="#7fc0ef" stroke={BLUE} /></Svg></SideItem>
          <SideItem><Svg><path d="M1.500 12.500V2H5.500L7 4H14V6" fill="#fde0bb" stroke="#e8912d" /><path d="M1.500 13L4 6.500H15" fill="#fbd5a5" stroke="#e8912d" /><path d="M6.500 6.500H15V14.500H6.500Z" fill="#fff" /><path d="M7.500 13.500V11.500L9.500 9.500L11 11L12.500 9.500L14 11.500V13.500Z" fill={BLUE} stroke="none" /></Svg></SideItem>
          <SideItem><Svg><circle cx="8" cy="8" r="6.500" fill="#fff" strokeWidth="1.200" /><path d="M11.500 4.500L9.500 9.500L4.500 11.500L6.500 6.500Z" fill={BLUE} stroke="none" /><circle cx="8" cy="8" r="1" fill="#fff" stroke="none" /></Svg></SideItem>
          <SideItem><Svg><T x={2.500} y={12} s={16} i b c={BLUE} f='"Liberation Serif", serif'>f</T><T x={8.500} y={14.500} s={13} i b c={BLUE} f='"Liberation Serif", serif'>x</T></Svg></SideItem>
          <SideGrip><Svg w={5} h={6}><path d="M1 1L4 3L1 5Z" fill="#fff" stroke="none" /></Svg></SideGrip>
        </Side>
      </Body>
      <StatusBar>
        <StatusPart $w={21} $pl={6}><Svg w={12} h={12}><path d="M1 1H11V11H2.500L1 9.500ZM3 1V5H9V1M3.500 11V7.500H8.500V11" stroke="#999" /></Svg></StatusPart>
        <StatusPart $w={155} $pl={6}><Fit w={44.500}>Sheet 2 of 4</Fit></StatusPart>
        <StatusPart $w={218} $pl={5.500}><Fit w={103}>Selected: 1 row, 14 columns</Fit></StatusPart>
        <StatusPart $w={217} $pl={6}><Fit w={80.500}>PageStyle_Condomini</Fit></StatusPart>
        <StatusPart $w={165} $c><Fit w={50}>English (USA)</Fit></StatusPart>
        <StatusPart $w={46} />
        <StatusPart $w={30} $pl={6}><Svg w={20} h={12}><path d="M.5 3H11.500V9.500H.5Z" stroke="#4aa0cf" fill="#fff" /><path d="M14.500 1H19M14.500 11H19M16.700 1V11" stroke="#222" /></Svg></StatusPart>
        <StatusPart $w={20} /><StatusPart $w={20} />
        <StatusPart $w={180} $pl={1.500} $c><Fit w={65}>Average: ; Sum: 0</Fit></StatusPart>
        <StatusPart $w={96} $pl={5}><Svg w={86} h={12}><path d="M1 6H7.500M79 6H85.500M82.300 2.800V9.200" stroke="#222" strokeWidth="1.400" /><path d="M11 6H76" stroke="#8a8a8a" /><path d="M41.500 3H43.500V9H41.500Z" fill="#fff" stroke="#333" /></Svg></StatusPart>
        <StatusPart $w={32} $pl={4} $last><Fit w={21}>100%</Fit></StatusPart>
      </StatusBar>
    </Window>
  );
}
